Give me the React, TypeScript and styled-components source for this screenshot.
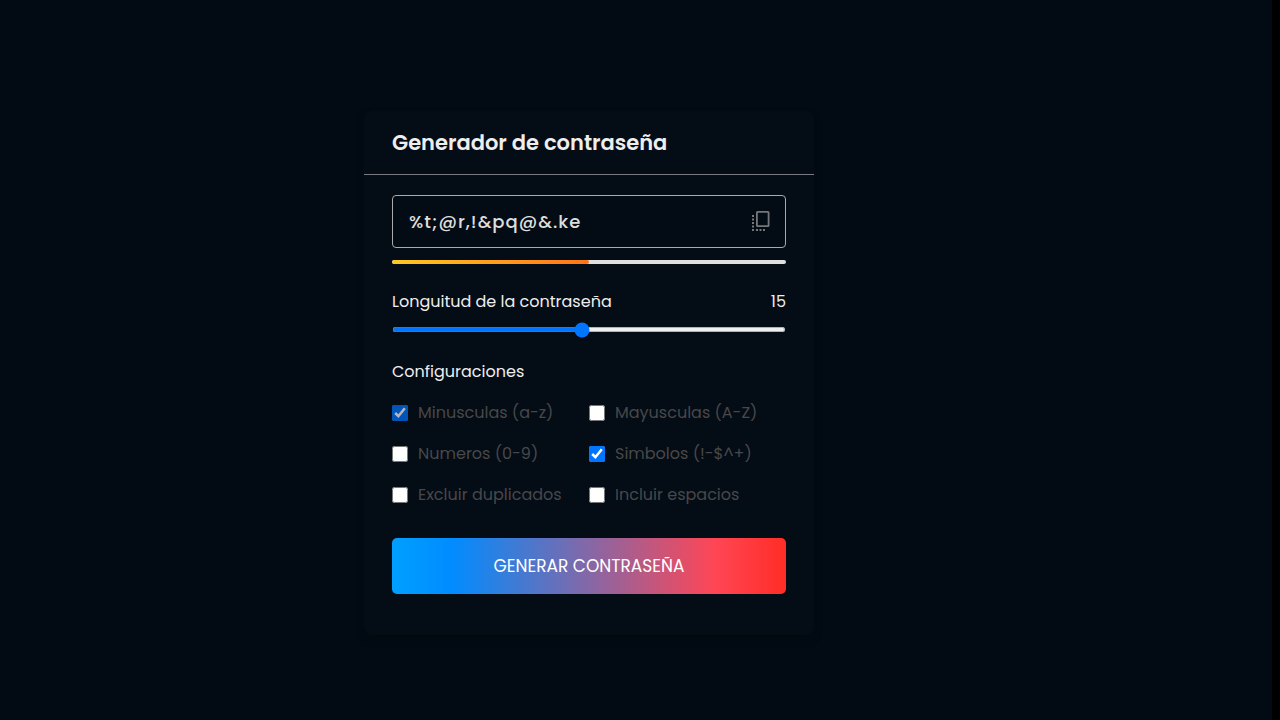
import React, { useState } from "react";
import styled, { createGlobalStyle } from "styled-components";

const GlobalStyle = createGlobalStyle`
  * { box-sizing: border-box; margin: 0; padding: 0; }
  body { background: #020b14; font-family: Poppins, Inter, "Open Sans", sans-serif; }
`;

const Page = styled.main`
  min-height: 100vh;
  display: flex;
  align-items: center;
  justify-content: center;
  padding: 26px 94px 0 0;
  background: #020b14;
  border-right: 8px solid #000;
`;

const Card = styled.form`
  width: 100%;
  max-width: 450px;
  padding: 14px 0 41px;
  border-radius: 8px;
  background: #040c16;
  box-shadow: 0 5px 10px rgba(0, 0, 0, 0.2);
`;

const Title = styled.h1`
  padding: 0 28px 13px;
  border-bottom: 1px solid #777a80;
  color: #eee;
  font-size: 21px;
  line-height: 36px;
  font-weight: 600;
`;

const Content = styled.div`
  padding: 20px 28px 0;
`;

const PasswordBox = styled.div`
  position: relative;
`;

const PasswordInput = styled.input`
  display: block;
  width: 100%;
  height: 53px;
  padding: 0 44px 0 16px;
  border: 1px solid #aaa;
  border-radius: 4px;
  outline: none;
  background: #030c15;
  color: #ddd;
  font: inherit;
  font-size: 18px;
  font-weight: 500;
  letter-spacing: 1px;
`;

const CopyButton = styled.button`
  position: absolute;
  top: 16px;
  right: 14px;
  width: 20px;
  height: 20px;
  border: 0;
  background: none;
  color: #777;
  cursor: pointer;
  svg { display: block; }
`;

const Strength = styled.div`
  height: 4px;
  margin-top: 12px;
  border-radius: 4px;
  background: #dfdfdf;
  overflow: hidden;
`;

const StrengthFill = styled.div`
  width: 50%;
  height: 100%;
  border-radius: 4px;
  background: linear-gradient(to right, #ffc822, #ff7518);
`;

const LengthRow = styled.div`
  display: flex;
  justify-content: space-between;
  margin-top: 26px;
  color: #eee;
  font-size: 16px;
  line-height: 24px;
`;

const Slider = styled.input`
  display: block;
  width: 100%;
  height: 5px;
  margin-top: 13px;
`;

const Settings = styled.fieldset`
  margin-top: 28px;
  border: 0;
`;

const Legend = styled.legend`
  color: #eee;
  font-size: 16px;
  line-height: 24px;
`;

const Options = styled.div`
  display: grid;
  grid-template-columns: 1fr 1fr;
  row-gap: 17px;
  margin-top: 17px;
`;

const Option = styled.label`
  display: flex;
  align-items: center;
  gap: 10px;
  color: #484848;
  font-size: 16px;
  line-height: 24px;
  font-weight: 400;
  white-space: nowrap;
`;

const Check = styled.input<{ $locked?: boolean }>`
  flex: none;
  width: 16px;
  height: 16px;
  opacity: ${(p) => (p.$locked ? 0.7 : 1)};
  pointer-events: ${(p) => (p.$locked ? "none" : "auto")};
`;

const Generate = styled.button`
  display: block;
  width: 100%;
  height: 56px;
  margin-top: 31px;
  border: 0;
  border-radius: 5px;
  background: linear-gradient(to right, #00a0ff 0%, #008cff 15%, #ff4655 82%, #ff2d26 100%);
  color: #fff;
  font: inherit;
  font-size: 17px;
  text-transform: uppercase;
  cursor: pointer;
`;

const options = [
  { id: "lower", text: "Minusculas (a-z)", on: true, locked: true },
  { id: "upper", text: "Mayusculas (A-Z)", on: false },
  { id: "numbers", text: "Numeros (0-9)", on: false },
  { id: "symbols", text: "Simbolos (!-$^+)", on: true },
  { id: "unique", text: "Excluir duplicados", on: false },
  { id: "spaces", text: "Incluir espacios", on: false },
];

const CopyIcon = () => (
  <svg width="20" height="20" viewBox="0 0 20 20" fill="currentColor" aria-hidden="true">
    <path fillRule="evenodd" d="M5.500 0h10.500a1.500 1.500 0 0 1 1.500 1.500v13a1.500 1.500 0 0 1-1.500 1.500H5.500a1.500 1.500 0 0 1-1.500-1.500v-13A1.500 1.500 0 0 1 5.500 0zM5.800 1.800v12.400h9.900V1.800z" />
    <path d="M0 4h2v2H0zM0 7.500h2v2H0zM0 11h2v2H0zM0 14.500h2v2H0zM0 18h2v2H0zM4 18h2v2H4zM7.500 18h2v2h-2zM11 18h2v2h-2z" />
  </svg>
);

export default function App() {
  const [length, setLength] = useState(15);
  return (
    <>
      <GlobalStyle />
      <Page>
        <Card onSubmit={(e) => e.preventDefault()}>
          <Title>Generador de contraseña</Title>
          <Content>
            <PasswordBox>
              <PasswordInput type="text" aria-label="Contraseña" readOnly value="%t;@r,!&pq@&.ke" />
              <CopyButton type="button" aria-label="Copiar">
                <CopyIcon />
              </CopyButton>
            </PasswordBox>
            <Strength>
              <StrengthFill />
            </Strength>
            <LengthRow>
              <label htmlFor="length">Longuitud de la contraseña</label>
              <output htmlFor="length">{length}</output>
            </LengthRow>
            <Slider id="length" type="range" min={1} max={30} value={length} onChange={(e) => setLength(Number(e.target.value))} />
            <Settings>
              <Legend>Configuraciones</Legend>
              <Options>
                {options.map((o) => (
                  <Option key={o.id} htmlFor={o.id}>
                    <Check type="checkbox" id={o.id} defaultChecked={o.on} $locked={o.locked} />
                    {o.text}
                  </Option>
                ))}
              </Options>
            </Settings>
            <Generate type="submit">Generar contraseña</Generate>
          </Content>
        </Card>
      </Page>
    </>
  );
}
